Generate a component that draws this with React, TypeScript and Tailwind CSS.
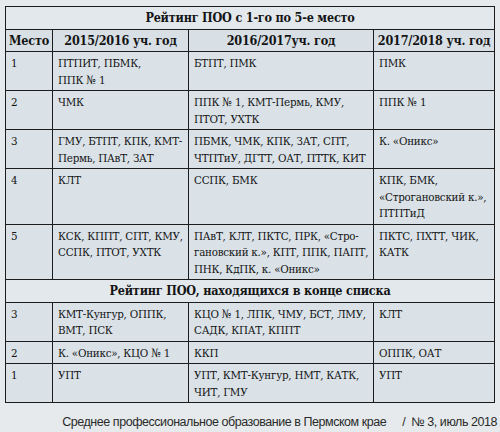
import React from "react";

type Row = { place: string; c1: string[]; c2: string[]; c3: string[] };

const top: Row[] = [
  { place: "1", c1: ["ПТПИТ, ПБМК,", "ППК № 1"], c2: ["БТПТ, ПМК"], c3: ["ПМК"] },
  { place: "2", c1: ["ЧМК"], c2: ["ППК № 1, КМТ-Пермь, КМУ,", "ПТОТ, УХТК"], c3: ["ППК № 1"] },
  {
    place: "3",
    c1: ["ГМУ, БТПТ, КПК, КМТ-", "Пермь, ПАвТ, ЗАТ"],
    c2: ["ПБМК, ЧМК, КПК, ЗАТ, СПТ,", "ЧТПТиУ, ДГТТ, ОАТ, ПТТК, КИТ"],
    c3: ["К. «Оникс»"],
  },
  { place: "4", c1: ["КЛТ"], c2: ["ССПК, БМК"], c3: ["КПК, БМК,", "«Строгановский к.»,", "ПТПТиД"] },
  {
    place: "5",
    c1: ["КСК, КППТ, СПТ, КМУ,", "ССПК, ПТОТ, УХТК"],
    c2: ["ПАвТ, КЛТ, ПКТС, ПРК, «Стро-", "гановский к.», КПТ, ППК, ПАПТ,", "ПНК, КдПК, к. «Оникс»"],
    c3: ["ПКТС, ПХТТ, ЧИК,", "КАТК"],
  },
];

const bottom: Row[] = [
  { place: "3", c1: ["КМТ-Кунгур, ОППК,", "ВМТ, ПСК"], c2: ["КЦО № 1, ЛПК, ЧМУ, БСТ, ЛМУ,", "САДК, КПАТ, КППТ"], c3: ["КЛТ"] },
  { place: "2", c1: ["К. «Оникс», КЦО № 1"], c2: ["ККП"], c3: ["ОППК, ОАТ"] },
  { place: "1", c1: ["УПТ"], c2: ["УПТ, КМТ-Кунгур, НМТ, КАТК,", "ЧИТ, ГМУ"], c3: ["УПТ"] },
];

function Lines({ lines }: { lines: string[] }) {
  return (
    <>
      {lines.map((l, i) => (
        <div key={i} className="whitespace-nowrap">
          {l}
        </div>
      ))}
    </>
  );
}

const td = "border border-[#1c1c1c] align-top pl-[5px] pr-[2px] pt-[3px] pb-[2px]";
const th = "border border-[#1c1c1c] text-center font-bold text-[12.5px] tracking-[-0.2px] pt-[3px] pb-[2px]";

function Body({ rows }: { rows: Row[] }) {
  return (
    <>
      {rows.map((r, i) => (
        <tr key={i} className="bg-[#dae2e8]">
          <td className={td}>{r.place}</td>
          <td className={td}>
            <Lines lines={r.c1} />
          </td>
          <td className={td}>
            <Lines lines={r.c2} />
          </td>
          <td className={td}>
            <Lines lines={r.c3} />
          </td>
        </tr>
      ))}
    </>
  );
}

export default function App() {
  return (
    <div className="w-[500px] h-[432px] bg-[#e6eaed] overflow-hidden pt-[6px] pl-[5px] text-[#141414]">
      <table
        className="table-fixed border-collapse border-[1.5px] border-[#1c1c1c] w-[489px] text-[11.5px] tracking-[-0.25px] leading-[16.5px] font-stretch-condensed"
        style={{ fontFamily: '"DejaVu Serif Condensed", "DejaVu Serif", serif' }}
      >
        <colgroup>
          <col className="w-[47px]" />
          <col className="w-[136px]" />
          <col className="w-[185px]" />
          <col className="w-[121px]" />
        </colgroup>
        <tbody>
          <tr className="bg-[#e2e8ec]">
            <td colSpan={4} className={th}>
              Рейтинг ПОО с 1-го по 5-е место
            </td>
          </tr>
          <tr className="bg-[#d8e0e6]">
            <td className={th}>Место</td>
            <td className={th}>2015/2016 уч. год</td>
            <td className={th}>2016/2017уч. год</td>
            <td className={th}>2017/2018 уч. год</td>
          </tr>
          <Body rows={top} />
          <tr className="bg-[#e2e8ec]">
            <td colSpan={4} className={th}>
              Рейтинг ПОО, находящихся в конце списка
            </td>
          </tr>
          <Body rows={bottom} />
        </tbody>
      </table>
      <div
        className="mt-[10px] pr-[3px] text-right text-[12.5px] tracking-[-0.45px] leading-[18px] text-[#2a2a2a] whitespace-nowrap"
        style={{ fontFamily: '"Liberation Sans", Arial, sans-serif' }}
      >
        Среднее профессиональное образование в Пермском крае
        <span className="ml-[16px] mr-[6px]">/</span>№ 3, июль 2018
      </div>
    </div>
  );
}
